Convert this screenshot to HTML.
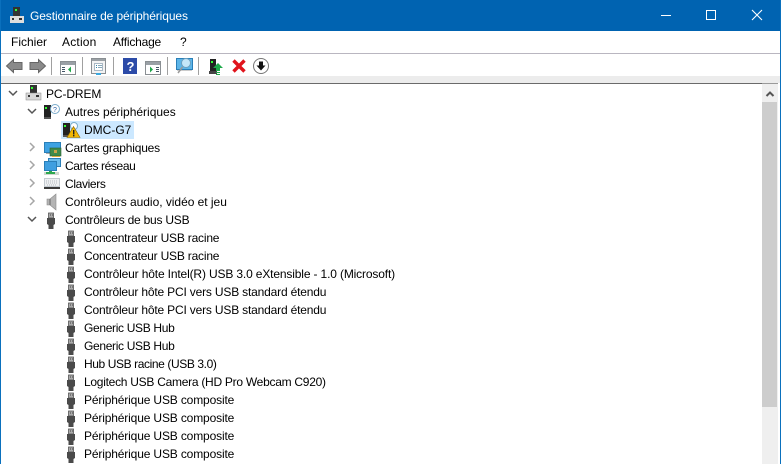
<!DOCTYPE html>
<html><head><meta charset="utf-8"><style>
html,body{margin:0;padding:0;background:#fff}
#w{position:relative;width:781px;height:464px;overflow:hidden;background:#fff;font-family:"Liberation Sans",sans-serif;font-size:12px;color:#000}
.a{position:absolute}
.t{position:absolute;white-space:nowrap;line-height:18px;height:18px}
.m{position:absolute;top:34px;line-height:16px;white-space:nowrap}
svg{position:absolute;overflow:visible}
.sep{position:absolute;top:57px;width:1px;height:18px;background:#a0a0a0}
</style></head><body><div id="w">
<div class="a" style="left:0;top:0;width:781px;height:31px;background:#0063b1"></div>
<div class="a" style="left:0;top:0;width:1px;height:464px;background:#0a70bd"></div>
<div class="a" style="left:780px;top:0;width:1px;height:464px;background:#0a70bd"></div>
<svg style="left:9px;top:6px" width="16" height="18" viewBox="0 0 16 18"><rect x="4" y="1" width="7" height="9" fill="#333"/><rect x="6" y="3" width="2" height="2" fill="#3f3"/><rect x="1" y="10" width="14" height="7" fill="#ddd"/><rect x="3" y="12" width="2" height="2" fill="#333"/><rect x="10" y="12" width="3" height="2" fill="#333"/></svg>
<div class="t" style="left:30px;top:7px;color:#fff;letter-spacing:-.1px">Gestionnaire de périphériques</div>
<div class="a" style="left:661px;top:15px;width:10px;height:1px;background:#fff"></div>
<div class="a" style="left:706px;top:10px;width:8px;height:8px;border:1px solid #fff"></div>
<svg style="left:752px;top:10px" width="10" height="10"><path d="M0 0L10 10M10 0L0 10" stroke="#fff" stroke-width="1.1"/></svg>

<div class="m" style="left:11px">Fichier</div>
<div class="m" style="left:62px;letter-spacing:.2px">Action</div>
<div class="m" style="left:113px;letter-spacing:-.2px">Affichage</div>
<div class="m" style="left:180px">?</div>
<div class="a" style="left:1px;top:53px;width:779px;height:1px;background:#b9b6c0"></div>

<svg style="left:6px;top:58px" width="42" height="16" viewBox="0 0 42 16"><path d="M.5 8L7.5 1.5V4.5H16V11.5H7.5V14.5Z" fill="#8a8a8a" stroke="#666"/><path d="M39.5 8L32.5 1.5V4.5H24V11.5H32.5V14.5Z" fill="#8a8a8a" stroke="#666"/></svg>
<div class="sep" style="left:51px"></div>
<svg style="left:60px;top:61px" width="16" height="14" viewBox="0 0 16 14"><rect x=".5" y=".5" width="15" height="13" fill="#fff" stroke="#8a8f93"/><rect x="1" y="1" width="14" height="3" fill="#9aa0a6"/><rect x="2" y="6" width="3" height="1" fill="#456"/><rect x="2" y="8" width="3" height="1" fill="#456"/><rect x="2" y="10" width="3" height="1" fill="#456"/><path d="M11 5.5V11.5L8 8.5Z" fill="#1fa64a"/></svg>
<div class="sep" style="left:82px"></div>
<svg style="left:91px;top:58px" width="15" height="17" viewBox="0 0 15 17"><rect x=".5" y=".5" width="14" height="15" fill="#f3f3f3" stroke="#8a8f93"/><rect x="1" y="1" width="13" height="2" fill="#9aa0a5"/><rect x="3.5" y="5.5" width="8" height="7" fill="#fff" stroke="#aab8c4"/><rect x="5" y="7" width="1" height="1" fill="#38a"/><rect x="7" y="7" width="4" height="1" fill="#8ab"/><rect x="5" y="9" width="1" height="1" fill="#38a"/><rect x="7" y="9" width="4" height="1" fill="#8ab"/><rect x="5" y="15" width="5" height="2" fill="#3aa8e0"/></svg>
<div class="sep" style="left:113px"></div>
<svg style="left:123px;top:58px" width="14" height="16" viewBox="0 0 14 16"><rect width="14" height="16" fill="#2c4ba8"/><text x="3.5" y="13" font-family="Liberation Sans" font-size="13" font-weight="700" fill="#fff">?</text></svg>
<svg style="left:145px;top:61px" width="16" height="14" viewBox="0 0 16 14"><rect x=".5" y=".5" width="15" height="13" fill="#fff" stroke="#8a8f93"/><rect x="1" y="1" width="14" height="3" fill="#9aa0a6"/><path d="M5 5.5V11.5L8 8.5Z" fill="#1fa64a"/><rect x="11" y="6" width="3" height="1" fill="#456"/><rect x="11" y="8" width="3" height="1" fill="#456"/><rect x="11" y="10" width="3" height="1" fill="#456"/></svg>
<div class="sep" style="left:167px"></div>
<svg style="left:176px;top:57px" width="17" height="18" viewBox="0 0 17 18"><rect x=".5" y="1.5" width="16" height="11" fill="#5db5e8" stroke="#2a7fb8"/><rect x="1" y="13" width="15" height="1" fill="#ccc"/><circle cx="10" cy="6" r="4.5" fill="#c4e6f8" stroke="#6d9fbe"/><path d="M6.5 10L2 16" stroke="#999" stroke-width="1.5"/></svg>
<div class="sep" style="left:198px"></div>
<svg style="left:209px;top:58px" width="14" height="17" viewBox="0 0 14 17"><rect x="1" y="1" width="6" height="12" fill="#222"/><rect x="2" y="3" width="2" height="2" fill="#3f3"/><rect x="0" y="13" width="8" height="3" fill="#444"/><path d="M9 5L14 10H11V13H7V10H4Z" fill="#1faa4b"/><rect x="7" y="14" width="4" height="1" fill="#1faa4b"/><rect x="7" y="16" width="4" height="1" fill="#1faa4b"/></svg>
<svg style="left:232px;top:59px" width="14" height="14" viewBox="0 0 14 14"><path d="M1.5 1.5L12.5 12.5M12.5 1.5L1.5 12.5" stroke="#e0141c" stroke-width="3.4"/></svg>
<svg style="left:253px;top:58px" width="16" height="16" viewBox="0 0 16 16"><circle cx="8" cy="8" r="7.5" fill="#fff" stroke="#777"/><path d="M6 3.5H10V7.5H12.5L8 12.5L3.5 7.5H6Z" fill="#111"/></svg>

<div class="a" style="left:1px;top:76px;width:779px;height:7px;background:#ececec"></div>
<div class="a" style="left:1px;top:83px;width:761px;height:1px;background:#6a6a6a"></div>
<div class="a" style="left:762px;top:83px;width:16px;height:1px;background:#9a9a9a"></div>

<div class="a" style="left:762px;top:84px;width:16px;height:380px;background:#efefef"></div>
<div class="a" style="left:762px;top:102px;width:15px;height:305px;background:#cdcdcd"></div>
<svg style="left:766px;top:91px" width="8" height="6"><path d="M.5 5L4 1.5L7.5 5" fill="none" stroke="#555" stroke-width="2"/></svg>

<!-- arrows -->
<svg style="left:0;top:84px" width="40" height="144" fill="none" stroke-width="1.5">
<path d="M9 7L13 11L17 7M28 25L32 29L36 25" stroke="#555"/>
<path d="M30 59L34 63L30 67M30 77L34 81L30 85M30 95L34 99L30 103M30 113L34 117L30 121" stroke="#a6a6a6"/>
<path d="M28 133L32 137L36 133" stroke="#555"/></svg>

<!-- PC -->
<svg style="left:26px;top:85px" width="15" height="16" viewBox="0 0 15 16"><rect x="4" y="0" width="7" height="8" fill="#333"/><rect x="5" y="2" width="2" height="2" fill="#3f3"/><rect x="0" y="8" width="15" height="7" fill="#d9d9d9" stroke="#888" stroke-width=".5"/><rect x="2" y="10" width="2" height="2" fill="#333"/><rect x="10" y="10" width="3" height="2" fill="#333"/></svg>
<div class="t" style="left:46px;top:85px;letter-spacing:-.1px">PC-DREM</div>

<!-- Autres -->
<svg style="left:44px;top:104px" width="16" height="16" viewBox="0 0 16 16"><rect x="0" y="1" width="7" height="12" fill="#222"/><rect x="1" y="3" width="2" height="2" fill="#3f3"/><rect x="0" y="13" width="7" height="2" fill="#555"/><circle cx="11" cy="5" r="4.5" fill="#fff" stroke="#7aaccc"/><text x="9" y="8" font-family="Liberation Sans" font-size="7" fill="#36a">?</text></svg>
<div class="t" style="left:65px;top:103px">Autres périphériques</div>

<!-- DMC -->
<div class="a" style="left:61px;top:121px;width:73px;height:18px;background:#cce8ff"></div>
<svg style="left:63px;top:122px" width="17" height="16" viewBox="0 0 17 16"><rect x="0" y="1" width="7" height="12" fill="#222"/><rect x="1" y="3" width="2" height="2" fill="#3f3"/><rect x="0" y="13" width="7" height="2" fill="#555"/><circle cx="11" cy="4" r="3.5" fill="#fff" stroke="#7aaccc"/><path d="M10.5 4.5L17 15.5H4Z" fill="#f2b705" stroke="#8a6500" stroke-width=".6"/><rect x="10" y="8" width="1.4" height="4.5" fill="#222"/><rect x="10" y="13" width="1.4" height="1.4" fill="#222"/></svg>
<div class="t" style="left:84px;top:121px">DMC-G7</div>

<!-- Cartes graphiques -->
<svg style="left:44px;top:142px" width="18" height="16" viewBox="0 0 18 16"><rect x=".5" y=".5" width="16" height="10" fill="#3ea2e2" stroke="#2a7fb8"/><rect x="2" y="11" width="8" height="1" fill="#aaa"/><rect x="6" y="6" width="11" height="8" fill="#3f8a4a" stroke="#2b5f33" stroke-width=".6"/><rect x="10" y="8" width="3" height="3" fill="#c9a44a"/><rect x="8" y="14" width="8" height="1" fill="#d9a93a"/></svg>
<div class="t" style="left:65px;top:139px;letter-spacing:-.18px">Cartes graphiques</div>

<!-- Cartes réseau -->
<svg style="left:44px;top:158px" width="17" height="17" viewBox="0 0 17 17"><rect x="4.5" y=".5" width="12" height="8" fill="#6bbcec" stroke="#2a7fb8"/><rect x=".5" y="3.5" width="12" height="9" fill="#3f9fe0" stroke="#2a7fb8"/><rect x="5" y="13" width="3" height="1" fill="#2da84f"/><rect x="0" y="14" width="15" height="3" fill="#cfd8d0"/><rect x="2" y="14" width="9" height="2" fill="#2da84f"/></svg>
<div class="t" style="left:65px;top:157px;letter-spacing:-.38px">Cartes réseau</div>

<!-- Claviers -->
<svg style="left:44px;top:178px" width="16" height="11" viewBox="0 0 16 11"><rect width="16" height="11" fill="#c3cad0"/><rect x="1" y="1" width="14" height="7" fill="#eef0f2"/><path d="M2 3H14M2 5H14M3 7H13" stroke="#b4bac0" stroke-width="1" stroke-dasharray="1 1"/><rect x="0" y="9" width="16" height="2" fill="#3a3a3a"/></svg>
<div class="t" style="left:65px;top:175px;letter-spacing:-.35px">Claviers</div>

<!-- Audio -->
<svg style="left:47px;top:194px" width="11" height="16" viewBox="0 0 11 16"><path d="M0 5H3L9 0V16L3 11H0Z" fill="#b4b4b4" stroke="#8a8a8a" stroke-width=".6"/><path d="M3 5V11" stroke="#666"/></svg>
<div class="t" style="left:65px;top:193px;letter-spacing:-.03px">Contrôleurs audio, vidéo et jeu</div>

<svg width="0" height="0" style="position:absolute"><defs><g id="u"><rect x="1.5" y="1" width="5" height="5" fill="#aaa" stroke="#555" stroke-width=".8"/><rect x="3" y="2.5" width="1" height="1" fill="#444"/><rect x="5" y="2.5" width="1" height="1" fill="#444"/><path d="M0 6H8V12L6.5 13V17H1.5V13L0 12Z" fill="#4a4a4a"/></g></defs></svg>

<svg style="left:47px;top:212px" width="9" height="16"><use href="#u"/></svg>
<div class="t" style="left:65px;top:211px;letter-spacing:-.23px">Contrôleurs de bus USB</div>

<svg style="left:67px;top:230px" width="9" height="16"><use href="#u"/></svg><div class="t" style="left:84px;top:229px;letter-spacing:-.2px">Concentrateur USB racine</div>
<svg style="left:67px;top:248px" width="9" height="16"><use href="#u"/></svg><div class="t" style="left:84px;top:247px;letter-spacing:-.2px">Concentrateur USB racine</div>
<svg style="left:67px;top:266px" width="9" height="16"><use href="#u"/></svg><div class="t" style="left:84px;top:265px;letter-spacing:-.15px">Contrôleur hôte Intel(R) USB 3.0 eXtensible - 1.0 (Microsoft)</div>
<svg style="left:67px;top:284px" width="9" height="16"><use href="#u"/></svg><div class="t" style="left:84px;top:283px;letter-spacing:-.18px">Contrôleur hôte PCI vers USB standard étendu</div>
<svg style="left:67px;top:302px" width="9" height="16"><use href="#u"/></svg><div class="t" style="left:84px;top:301px;letter-spacing:-.18px">Contrôleur hôte PCI vers USB standard étendu</div>
<svg style="left:67px;top:320px" width="9" height="16"><use href="#u"/></svg><div class="t" style="left:84px;top:319px;letter-spacing:-.33px">Generic USB Hub</div>
<svg style="left:67px;top:338px" width="9" height="16"><use href="#u"/></svg><div class="t" style="left:84px;top:337px;letter-spacing:-.33px">Generic USB Hub</div>
<svg style="left:67px;top:356px" width="9" height="16"><use href="#u"/></svg><div class="t" style="left:84px;top:355px;letter-spacing:-.4px">Hub USB racine (USB 3.0)</div>
<svg style="left:67px;top:374px" width="9" height="16"><use href="#u"/></svg><div class="t" style="left:84px;top:373px;letter-spacing:-.27px">Logitech USB Camera (HD Pro Webcam C920)</div>
<svg style="left:67px;top:392px" width="9" height="16"><use href="#u"/></svg><div class="t" style="left:84px;top:391px;letter-spacing:-.15px">Périphérique USB composite</div>
<svg style="left:67px;top:410px" width="9" height="16"><use href="#u"/></svg><div class="t" style="left:84px;top:409px;letter-spacing:-.15px">Périphérique USB composite</div>
<svg style="left:67px;top:428px" width="9" height="16"><use href="#u"/></svg><div class="t" style="left:84px;top:427px;letter-spacing:-.15px">Périphérique USB composite</div>
<svg style="left:67px;top:446px" width="9" height="16"><use href="#u"/></svg><div class="t" style="left:84px;top:445px;letter-spacing:-.15px">Périphérique USB composite</div>
</div></body></html>
